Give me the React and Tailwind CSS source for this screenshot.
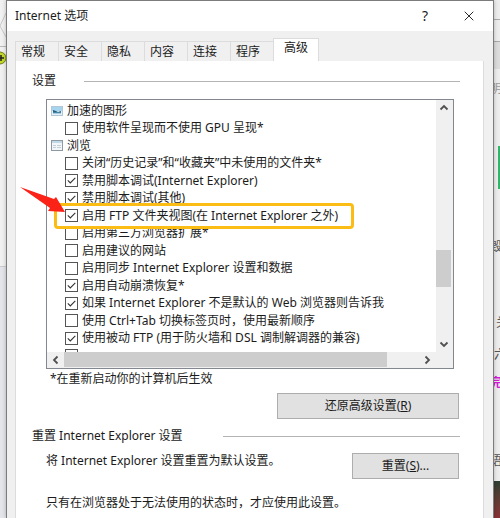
import { useState } from 'react';
import { X } from 'lucide-react';

const tabs = ['常规', '安全', '隐私', '内容', '连接', '程序', '高级'];

const rows = [
  { label: '加速的图形', icon: 'picture' },
  { label: '使用软件呈现而不使用 GPU 呈现*', checked: false },
  { label: '浏览', icon: 'window' },
  { label: '关闭“历史记录”和“收藏夹”中未使用的文件夹*', checked: false },
  { label: '禁用脚本调试(Internet Explorer)', checked: true },
  { label: '禁用脚本调试(其他)', checked: true },
  { label: '启用 FTP 文件夹视图(在 Internet Explorer 之外)', checked: true, marked: true },
  { label: '启用第三方浏览器扩展*', checked: false },
  { label: '启用建议的网站', checked: false },
  { label: '启用同步 Internet Explorer 设置和数据', checked: false },
  { label: '启用自动崩溃恢复*', checked: true },
  { label: '如果 Internet Explorer 不是默认的 Web 浏览器则告诉我', checked: true },
  { label: '使用 Ctrl+Tab 切换标签页时，使用最新顺序', checked: false },
  { label: '使用被动 FTP (用于防火墙和 DSL 调制解调器的兼容)', checked: true },
];

function GroupTitle({ children, gap }) {
  return (
    <div className={`flex items-center ${gap}`}>
      <h2 className="shrink-0 leading-4">{children}</h2>
      <span className="h-px flex-1 bg-[#b4b4b4]" />
    </div>
  );
}

function CategoryIcon({ type }) {
  if (type === 'picture') {
    return (
      <svg width="12" height="12" viewBox="0 0 12 12" className="shrink-0">
        <rect x=".5" y="1.5" width="11" height="9" fill="#e4f1f9" stroke="#b3c6d2" />
        <rect x="1" y="2" width="10" height="4" fill="#a5d4ee" />
        <path d="M2 5l3 1 2 1 3-1v2H2z" fill="#28607f" />
        <path d="M2 8h8" stroke="#6aa6c8" />
      </svg>
    );
  }
  return (
    <svg width="12" height="12" viewBox="0 0 12 12" className="shrink-0">
      <rect x=".5" y=".5" width="11" height="10" fill="#f3f6f8" stroke="#8e9aa3" />
      <path d="M1 2h10" stroke="#8fbad6" />
      <path d="M2 5.5h3M6 5.5h4M2 7.5h3M6 7.5h4" stroke="#c3ced6" />
    </svg>
  );
}

function OptionRow({ row }) {
  const [checked, setChecked] = useState(row.checked);

  if (row.icon) {
    return (
      <li className="flex items-center gap-1 pl-1">
        <CategoryIcon type={row.icon} />
        <span>{row.label}</span>
      </li>
    );
  }

  return (
    <li className="relative flex items-center pl-[18px]">
      <label className="flex items-center gap-1">
        <span className="relative flex h-[13px] w-[13px] shrink-0">
          <input
            type="checkbox"
            checked={checked}
            onChange={(e) => setChecked(e.target.checked)}
            className="h-[13px] w-[13px] appearance-none border border-[#555] bg-white"
          />
          {checked && (
            <svg viewBox="0 0 13 13" className="pointer-events-none absolute inset-0" fill="none" stroke="#333" strokeWidth="1.1">
              <path d="M2.8 6.4l2.5 2.6 5-5.2" />
            </svg>
          )}
        </span>
        <span>{row.label}</span>
      </label>
      {row.marked && (
        <span className="pointer-events-none absolute -inset-y-1 left-[7px] z-10 w-[300px] rounded-sm border-3 border-[#fbbc14]" />
      )}
    </li>
  );
}

function Chevron({ d, label }) {
  return (
    <button aria-label={label} className="flex h-4 w-4 shrink-0 items-center justify-center">
      <svg width="10" height="10" viewBox="0 0 10 10" fill="none" stroke="#505050" strokeWidth="1.8">
        <path d={d} />
      </svg>
    </button>
  );
}

function OptionList() {
  return (
    <div className="relative">
      <div className="border border-[#828790] bg-white">
        <div className="flex h-[252px]">
          <div className="min-w-0 flex-1 overflow-hidden pt-[2px] whitespace-nowrap">
            <ul className="grid h-[245px] grid-rows-[repeat(14,minmax(0,1fr))]">
              {rows.map((row) => (
                <OptionRow key={row.label} row={row} />
              ))}
            </ul>
            <div className="pt-[2px] pl-[18px]">
              <span className="block h-[13px] w-[13px] border border-[#555]" />
            </div>
          </div>
          <div className="flex w-[17px] flex-col bg-[#f0f0f0]">
            <Chevron label="向上滚动" d="M1.5 6.5L5 3l3.5 3.5" />
            <div className="flex flex-1 flex-col">
              <span className="grow-[136]" />
              <span className="mr-[2px] h-[37px] bg-[#cdcdcd]" />
              <span className="grow-[50]" />
            </div>
            <Chevron label="向下滚动" d="M1.5 3.5L5 7l3.5-3.5" />
          </div>
        </div>
        <div className="flex h-4 bg-[#f0f0f0] pr-[18px] pl-px">
          <Chevron label="向左滚动" d="M6.5 1.5L3 5l3.5 3.5" />
          <div className="flex flex-1 pb-px">
            <span className="w-[91%] bg-[#cdcdcd]" />
          </div>
          <Chevron label="向右滚动" d="M3.5 1.5L7 5l-3.5 3.5" />
        </div>
      </div>
      {/* Pointer to the marked option */}
      <svg width="46" height="30" viewBox="0 0 46 30" className="pointer-events-none absolute top-[87px] -left-[26px] z-20">
        <path d="M0 1L34 13l2-2 9 15-17-1 2-3z" fill="#fb2318" />
      </svg>
    </div>
  );
}

const buttonClass = 'border border-[#adadad] bg-[#e1e1e1] h-[26px] leading-4 hover:border-[#0078d7]';

export default function App() {
  const [active, setActive] = useState('高级');

  return (
    <div className="flex min-h-screen overflow-hidden bg-[#ececec] text-xs text-[#1b1b1b] [font-family:'Noto_Sans','Noto_Sans_CJK_SC',sans-serif]">
      {/* Page behind, left edge */}
      <div className="flex w-[6px] shrink-0 flex-col overflow-hidden bg-[#f1f1f1]">
        <svg width="6" height="66" viewBox="0 0 6 66">
          <path d="M6 13L0 26l6 11" fill="none" stroke="#c8c8c8" />
          <path d="M0 46.5h6" stroke="#bbb" />
          <circle cx="0" cy="58" r="6" fill="#c3d829" stroke="#6f7b18" />
          <path d="M0 58h4M1 55v6" stroke="#222" strokeWidth="1.5" />
        </svg>
        <span className="h-[201px] border-b border-[#ccc]" />
        <span className="flex-1 bg-[#e4e5ea]" />
      </div>

      <main className="z-10 flex min-w-0 flex-1 flex-col border-x border-t-1 border-[#7c7c7c] bg-[#f0f0f0] shadow-[0_0_4px_rgba(0,0,0,0.25)]">
        <header className="flex h-[30px] items-center bg-white pr-4 pl-2">
          <h1 className="flex-1">Internet 选项</h1>
          <button aria-label="帮助" className="w-4 text-sm">?</button>
          <button aria-label="关闭" className="ml-7 flex w-4 justify-center">
            <X size={16} strokeWidth={1.4} />
          </button>
        </header>

        <div className="flex flex-1 flex-col pt-[7px] pr-[9px] pl-2">
          <div role="tablist" className="flex items-end">
            {tabs.map((tab) => (
              <button
                key={tab}
                role="tab"
                aria-selected={tab === active}
                onClick={() => setActive(tab)}
                className={
                  tab === active
                    ? 'h-[23px] w-[46px] border-x border-t border-[#dcdcdc] bg-white pb-1 leading-4'
                    : 'h-5 w-[43px] border-t border-l border-[#dcdcdc] pr-2 leading-4'
                }
              >
                {tab}
              </button>
            ))}
          </div>

          <section className="flex-1 border-r border-l border-[#dcdcdc] bg-white pt-3 pr-[23px] pl-4">
            <GroupTitle gap="gap-7">设置</GroupTitle>
            <div className="mt-[10px] mr-[6px] ml-[14px]">
              <OptionList />
              <p className="mt-[2px] pl-1 leading-4">*在重新启动你的计算机后生效</p>
            </div>
            <div className="mt-[6px] flex justify-end pr-px">
              <button className={`${buttonClass} w-[182px]`}>
                还原高级设置(<u>R</u>)
              </button>
            </div>

            <div className="mt-[9px]">
              <GroupTitle gap="gap-10">重置 Internet Explorer 设置</GroupTitle>
            </div>
            <div className="mt-[9px] flex items-start justify-between pr-px pl-[14px]">
              <p className="leading-4">将 Internet Explorer 设置重置为默认设置。</p>
              <button className={`${buttonClass} w-[107px]`}>
                重置(<u>S</u>)...
              </button>
            </div>
            <p className="mt-4 pl-[14px] leading-4">只有在浏览器处于无法使用的状态时，才应使用此设置。</p>
          </section>
        </div>
      </main>

      {/* Page behind, right edge */}
      <div className="flex w-[6px] shrink-0 flex-col overflow-hidden whitespace-nowrap bg-[#ededed] text-[#555]">
        <span className="h-5 border-b border-[#aaa]" />
        <span className="h-[22px] border-b border-[#aaa]" />
        <span className="h-[27px] bg-[#dcdcdc]" />
        <span className="mt-3 -ml-1 leading-4 text-[#999]">明</span>
        <span className="mt-[49px] ml-1 h-[43px] bg-[#35b56b]" />
        <span className="mt-[50px] -ml-1 leading-4">毁</span>
        <span className="mt-[60px] ml-[2px] leading-4">关</span>
        <span className="mt-4 leading-4">六</span>
        <span className="mt-3 -ml-1 leading-4 font-bold text-[#cf1fd2]">完</span>
        <span className="mt-[62px] -ml-1 leading-4">语</span>
        <span className="mt-3 flex-1 bg-linear-to-b from-[#2c3f34] to-[#8a2f35]" />
      </div>
    </div>
  );
}
